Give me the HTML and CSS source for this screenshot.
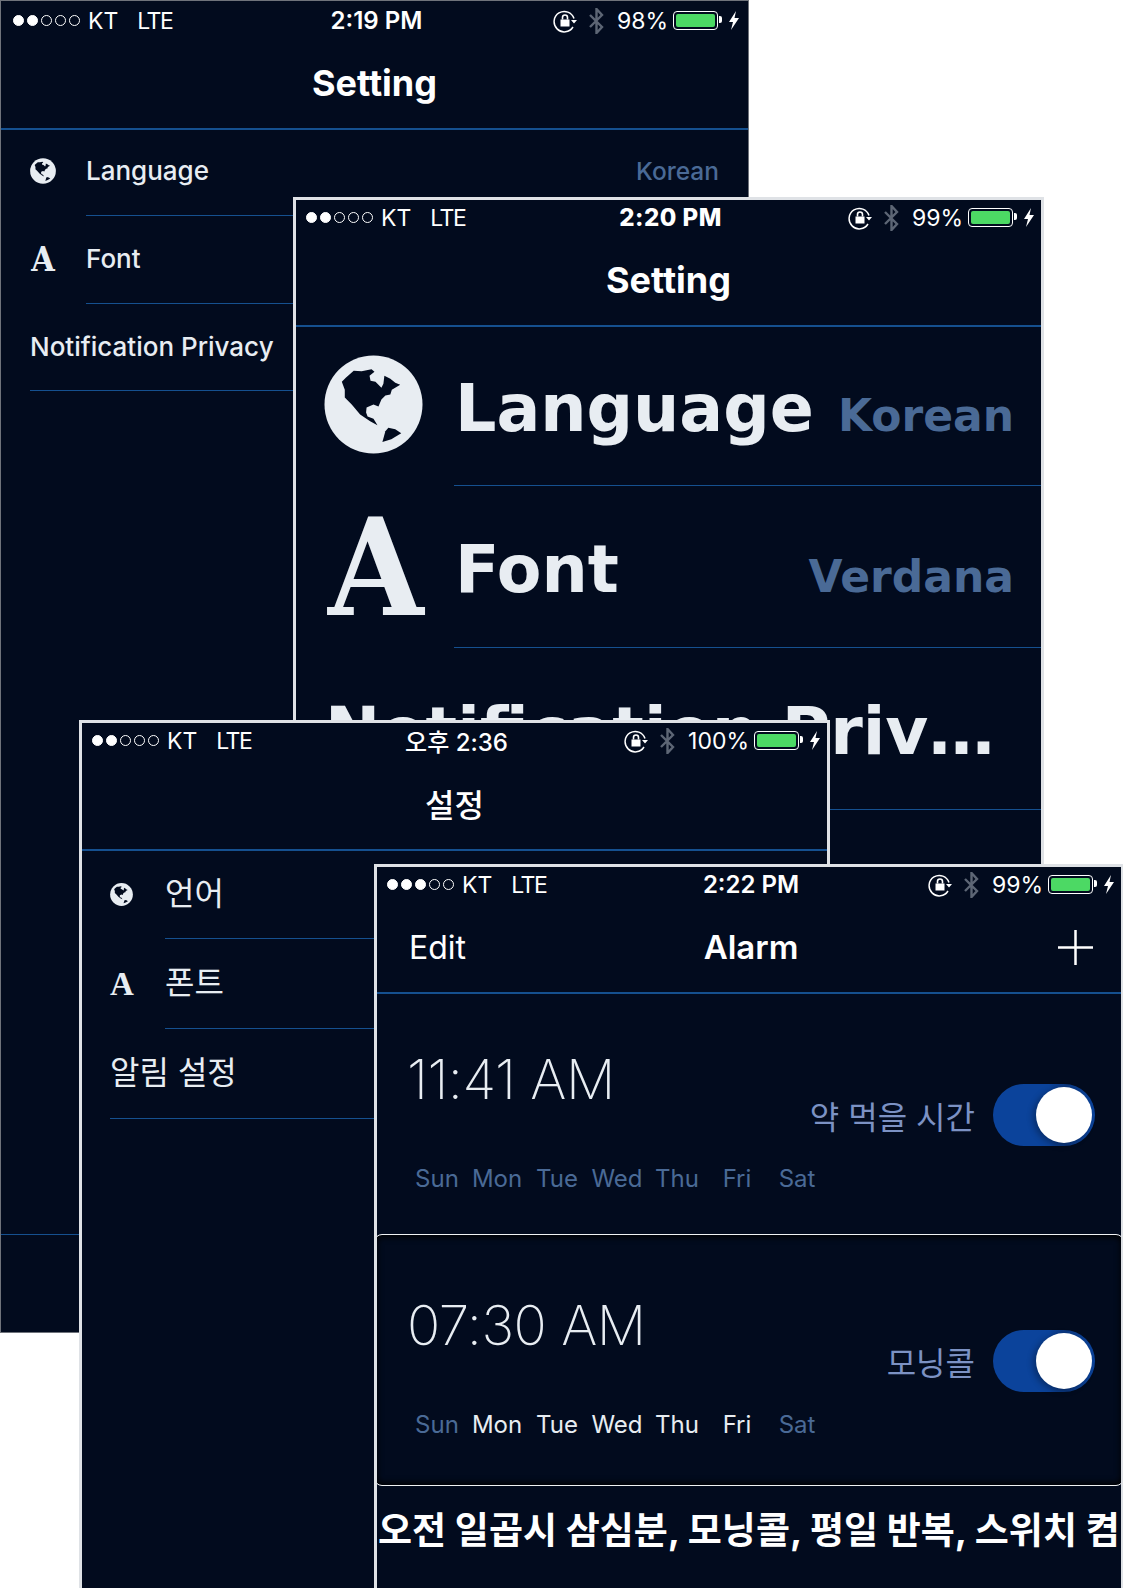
FILE: index.html
```html
<!DOCTYPE html>
<html lang="ko">
<head>
    <meta charset="UTF-8">
    <meta name="viewport" content="width=device-width, initial-scale=1.0">
    <title>Setting and Alarm screens</title>
    <link rel="stylesheet" href="styles.css">
</head>
<body>
    <svg class="sprite" aria-hidden="true">
        <symbol id="i-globe" viewBox="0 0 100 100">
            <circle cx="50" cy="50" r="49.5" fill="#e8edf2"/>
            <path fill="#020b1e" d="M18 27L22 23 30 16 38 16.500 48 14.500 51 17 46 21 47 26 52 27 58 33 60 29 61 21 67 24 72 28 77 30 68.500 35 67 40 62 41 58 45 55 52 50 50 43 53 42.500 58 44 62 50 64.500 54 71 46.600 67 36.500 60 28 50 21 43 21 35Z"/>
            <path fill="#020b1e" d="M65 73.500L72 75 78 79 68 85 59 88 62 77Z"/>
        </symbol>
        <symbol id="i-lock" viewBox="0 0 24 24">
            <path fill="none" stroke="#fff" stroke-width="1.5" d="M21 9.500A10.200 10.200 0 1 0 20 18"/>
            <path fill="#fff" d="M24 11h-6l3 3.500zM7.500 10.500h9v7h-9z"/>
            <path fill="none" stroke="#fff" stroke-width="1.600" d="M9.500 10.500V8.500a2.500 2.500 0 0 1 5 0v2"/>
        </symbol>
        <symbol id="i-bluetooth" viewBox="0 0 15 26">
            <path fill="none" stroke="#5d6675" stroke-width="2.400" d="M1 7l12 12-5.500 6V1L13 7 1 19"/>
        </symbol>
        <symbol id="i-bolt" viewBox="0 0 10 19">
            <path fill="#fff" d="M7 0L0 11h4l-2 8 8-12H5.500z"/>
        </symbol>
    </svg>

    <div class="page">

        <!-- english, normal text size -->
        <section class="phone phone-one">
            <div class="status">
                <div class="carrier">
                    <span class="dots"><i class="on"></i><i class="on"></i><i></i><i></i><i></i></span>
                    <span>KT</span><span class="net">LTE</span>
                </div>
                <div class="clock">2:19 PM</div>
                <div class="tray">
                    <svg class="ic-lock"><use href="#i-lock"/></svg>
                    <svg class="ic-bt"><use href="#i-bluetooth"/></svg>
                    <span class="pct">98%</span>
                    <span class="battery"><b></b></span>
                    <svg class="ic-bolt"><use href="#i-bolt"/></svg>
                </div>
            </div>
            <header class="nav"><h1>Setting</h1></header>
            <ul class="list">
                <li class="row">
                    <svg class="row-globe"><use href="#i-globe"/></svg>
                    <div class="row-body"><span class="row-label">Language</span><span class="row-value">Korean</span></div>
                </li>
                <li class="row">
                    <span class="row-a">A</span>
                    <div class="row-body"><span class="row-label">Font</span></div>
                </li>
                <li class="row">
                    <div class="row-body"><span class="row-label">Notification Privacy</span></div>
                </li>
            </ul>
            <div class="tabline"></div>
        </section>

        <!-- english, largest dynamic type -->
        <section class="phone phone-two">
            <div class="status">
                <div class="carrier">
                    <span class="dots"><i class="on"></i><i class="on"></i><i></i><i></i><i></i></span>
                    <span>KT</span><span class="net">LTE</span>
                </div>
                <div class="clock">2:20 PM</div>
                <div class="tray">
                    <svg class="ic-lock"><use href="#i-lock"/></svg>
                    <svg class="ic-bt"><use href="#i-bluetooth"/></svg>
                    <span class="pct">99%</span>
                    <span class="battery"><b></b></span>
                    <svg class="ic-bolt"><use href="#i-bolt"/></svg>
                </div>
            </div>
            <header class="nav"><h1>Setting</h1></header>
            <ul class="list">
                <li class="row">
                    <svg class="row-globe"><use href="#i-globe"/></svg>
                    <div class="row-body"><span class="row-label">Language</span><span class="row-value">Korean</span></div>
                </li>
                <li class="row">
                    <span class="row-a">A</span>
                    <div class="row-body"><span class="row-label">Font</span><span class="row-value">Verdana</span></div>
                </li>
                <li class="row">
                    <div class="row-body"><span class="row-label">Notification Privacy</span></div>
                </li>
            </ul>
        </section>

        <!-- korean -->
        <section class="phone phone-three">
            <div class="status">
                <div class="carrier">
                    <span class="dots"><i class="on"></i><i class="on"></i><i></i><i></i><i></i></span>
                    <span>KT</span><span class="net">LTE</span>
                </div>
                <div class="clock">오후 2:36</div>
                <div class="tray">
                    <svg class="ic-lock"><use href="#i-lock"/></svg>
                    <svg class="ic-bt"><use href="#i-bluetooth"/></svg>
                    <span class="pct">100%</span>
                    <span class="battery"><b></b></span>
                    <svg class="ic-bolt"><use href="#i-bolt"/></svg>
                </div>
            </div>
            <header class="nav"><h1>설정</h1></header>
            <ul class="list">
                <li class="row">
                    <svg class="row-globe"><use href="#i-globe"/></svg>
                    <div class="row-body"><span class="row-label">언어</span></div>
                </li>
                <li class="row">
                    <span class="row-a">A</span>
                    <div class="row-body"><span class="row-label">폰트</span></div>
                </li>
                <li class="row">
                    <div class="row-body"><span class="row-label">알림 설정</span></div>
                </li>
            </ul>
        </section>

        <!-- alarm list with voiceover caption -->
        <section class="phone phone-four">
            <div class="status">
                <div class="carrier">
                    <span class="dots"><i class="on"></i><i class="on"></i><i class="on"></i><i></i><i></i></span>
                    <span>KT</span><span class="net">LTE</span>
                </div>
                <div class="clock">2:22 PM</div>
                <div class="tray">
                    <svg class="ic-lock"><use href="#i-lock"/></svg>
                    <svg class="ic-bt"><use href="#i-bluetooth"/></svg>
                    <span class="pct">99%</span>
                    <span class="battery"><b></b></span>
                    <svg class="ic-bolt"><use href="#i-bolt"/></svg>
                </div>
            </div>
            <header class="nav nav-alarm">
                <span class="nav-edit">Edit</span>
                <h1>Alarm</h1>
                <svg class="nav-plus" viewBox="0 0 35 35"><path fill="none" stroke="#fff" stroke-width="2.500" d="M17.500 0v35M0 17.500h35"/></svg>
            </header>

            <div class="alarm">
                <div class="alarm-left">
                    <div class="alarm-time">11:41 AM</div>
                    <div class="days">
                        <span>Sun</span><span>Mon</span><span>Tue</span><span>Wed</span><span>Thu</span><span>Fri</span><span>Sat</span>
                    </div>
                </div>
                <div class="alarm-right">
                    <span class="alarm-name">약 먹을 시간</span>
                    <div class="toggle"><i></i></div>
                </div>
            </div>

            <div class="alarm alarm-focus">
                <div class="alarm-left">
                    <div class="alarm-time">07:30 AM</div>
                    <div class="days">
                        <span>Sun</span><span class="active">Mon</span><span class="active">Tue</span><span class="active">Wed</span><span class="active">Thu</span><span class="active">Fri</span><span>Sat</span>
                    </div>
                </div>
                <div class="alarm-right">
                    <span class="alarm-name">모닝콜</span>
                    <div class="toggle"><i></i></div>
                </div>
            </div>

            <p class="caption">오전 일곱시 삼심분, 모닝콜, 평일 반복, 스위치 켬</p>
        </section>

    </div>
</body>
</html>
```

FILE: styles.css
```css
* { box-sizing: border-box; }
html, body { margin: 0; padding: 0; background: #fff; }
.sprite { display: none; }
.page {
    position: relative;
    width: 1123px;
    height: 1588px;
    overflow: hidden;
    font-family: 'Inter', 'Noto Sans CJK KR', sans-serif;
    color: #e8edf2;
}

/* the screenshots overlap each other like windows */
.phone {
    position: absolute;
    width: 750px;
    height: 1334px;
    background: #020b1e;
    overflow: hidden;
}
.phone::after {
    content: "";
    position: absolute;
    inset: 0;
    border: 3px solid #dfe2e6;
    pointer-events: none;
}
.phone-one { left: 0; top: 0; width: 749px; height: 1333px; }
.phone-one::after { border: 1px solid #6f737b; }
.phone-two { left: 293px; top: 197px; width: 751px; }
.phone-three { left: 79px; top: 720px; width: 751px; }
.phone-four { left: 374px; top: 864px; }

/* status bar */
.status {
    display: grid;
    grid-template-columns: 1fr auto 1fr;
    align-items: center;
    height: 40px;
    padding: 1px 9px 0 13px;
    color: #fff;
    font-size: 23px;
}
.carrier { display: flex; align-items: center; }
.carrier .net { margin-left: 19px; letter-spacing: -1.5px; }
.dots { display: flex; gap: 3px; margin-right: 8px; }
.dots i {
    width: 11px;
    height: 11px;
    border: 1px solid #fff;
    border-radius: 50%;
}
.dots i.on { background: #fff; }
.clock { font-size: 24px; font-weight: 600; }
.phone-two .clock { font-weight: 800; letter-spacing: 0.5px; }
.phone-three .clock { font-weight: 500; }
.tray { display: flex; align-items: center; justify-content: flex-end; }
.ic-lock { width: 24px; height: 24px; margin-right: 12px; }
.ic-bt { width: 15px; height: 26px; margin-right: 13px; }
.pct { margin-right: 5px; }
.battery {
    position: relative;
    width: 45px;
    height: 19px;
    padding: 2px;
    border: 1px solid #fff;
    border-radius: 4px;
    margin-right: 10px;
}
.battery b { display: block; height: 100%; background: #4cd964; border-radius: 2px; }
.battery::after {
    content: "";
    position: absolute;
    right: -5px;
    top: 4px;
    width: 3px;
    height: 7px;
    background: #fff;
    border-radius: 0 2px 2px 0;
}
.ic-bolt { width: 12px; height: 19px; }

/* nav bar */
.nav {
    display: flex;
    align-items: center;
    justify-content: center;
    height: 90px;
    padding-bottom: 2px;
    border-bottom: 2px solid #15508f;
}
.nav h1 { margin: 0; font-size: 36px; font-weight: 700; color: #fff; }
.phone-three .nav { height: 91px; padding-bottom: 4px; }
.phone-three .nav h1 { font-size: 32px; font-weight: 500; }

/* settings list */
.list { margin: 0; padding: 0; list-style: none; }
.row { display: flex; padding-left: 30px; height: 87.5px; }
.row:first-child { height: 86px; }
.row-globe { width: 26px; height: 26px; margin: 28px 30px 0 0; flex: none; }
.row-a {
    width: 26px;
    margin-right: 30px;
    flex: none;
    font-family: 'DejaVu Serif', serif;
    font-weight: 700;
    font-size: 33px;
    line-height: 87px;
    text-align: center;
    transform: scaleX(0.92);
}
.row-body {
    flex: 1;
    min-width: 0;
    display: flex;
    align-items: baseline;
    justify-content: space-between;
    padding: 25px 30px 0 0;
    border-bottom: 1px solid #15508f;
}
.phone-one .row + .row .row-body { padding-top: 27px; }
.row-label { font-size: 26px; white-space: nowrap; font-weight: 500; }
.row-value { font-size: 24.5px; color: #4a6a96; font-weight: 500; }
.tabline { margin-top: 843px; border-top: 1px solid #15508f; }

/* large type screen */
.phone-two .row { height: 162px; padding-left: 31px; }
.phone-two .row:first-child { height: 159px; }
.phone-two .row-globe { width: 99px; height: 99px; margin: 28px 31px 0 0; }
.phone-two .row-a {
    width: 99px;
    margin-right: 31px;
    font-size: 134px;
    line-height: 164px;
    transform: scaleX(0.92);
}
.phone-two .row-body { padding-top: 45px; padding-right: 30px; }
.phone-two .row:first-child .row-body { padding-top: 43px; }
.phone-two .row-label {
    font-family: 'DejaVu Sans', sans-serif;
    font-weight: 700;
    font-size: 65px;
    line-height: 78px;
    padding-left: 1px;
    overflow: hidden;
    text-overflow: ellipsis;
}
.phone-two .row:last-child .row-body { padding-right: 34px; }
.phone-two .row:last-child .row-label { font-size: 66px; }
.phone-two .row-value {
    font-family: 'DejaVu Sans', sans-serif;
    font-weight: 700;
    font-size: 44px;
}

/* korean screen */
.phone-three .row { height: 90px; padding-left: 31px; }
.phone-three .row:first-child { height: 88px; }
.phone-three .row-globe { width: 23px; height: 23px; margin: 32px 32px 0 0; }
.phone-three .row-a {
    width: 23px;
    margin-right: 32px;
    font-family: 'Liberation Serif', serif;
    font-size: 33px;
    line-height: 90px;
    transform: none;
}
.phone-three .row-body { padding-top: 18px; }
.phone-three .row:first-child .row-body { padding-top: 17px; }
.phone-three .row-label { font-size: 32px; font-weight: 400; }

/* alarm screen */
.nav-alarm {
    display: grid;
    grid-template-columns: 1fr auto 1fr;
    padding: 0 31px 2px 35px;
}
.nav-edit { font-size: 32px; color: #fff; }
.nav-alarm h1 { font-size: 33px; font-weight: 600; }
.nav-plus { width: 35px; height: 35px; justify-self: end; }
.alarm {
    display: flex;
    justify-content: space-between;
    height: 240px;
    padding: 54px 29px 0 33px;
}
/* the weekday row runs under the name and toggle, so the column stays narrow */
.alarm-left { width: 380px; flex: none; }
.alarm-time { font-size: 55px; line-height: 62px; font-weight: 200; letter-spacing: -0.5px; }
.days { display: flex; margin-top: 54px; }
.days span {
    flex: none;
    width: 60px;
    text-align: center;
    font-size: 24px;
    line-height: 30px;
    color: #4a6a96;
}
.days span.active { color: #e8edf2; }
.alarm-right { display: flex; align-items: center; gap: 18px; height: 62px; margin-top: 36px; flex: none; }
.alarm-name { font-size: 32px; color: #7c92c4; white-space: nowrap; }
.toggle {
    display: flex;
    justify-content: flex-end;
    align-items: center;
    width: 102px;
    height: 62px;
    padding-right: 3px;
    border-radius: 31px;
    background: linear-gradient(90deg, #0b439b 55%, #0a3780 70%, #0b439b);
}
.toggle i {
    width: 56px;
    height: 56px;
    border-radius: 50%;
    background: #fff;
    box-shadow: -3px 2px 6px rgba(0, 0, 0, 0.3);
}
.alarm-focus {
    height: 252px;
    padding: 59px 28px 0 32px;
    border: 1px solid #f0f2f4;
    border-radius: 8px;
    box-shadow: inset 0 0 6px 2px #000;
}
.caption {
    margin: 23px 0 0;
    padding-left: 4px;
    font-size: 37px;
    line-height: 44px;
    font-weight: 700;
    color: #fff;
    white-space: nowrap;
}
```
